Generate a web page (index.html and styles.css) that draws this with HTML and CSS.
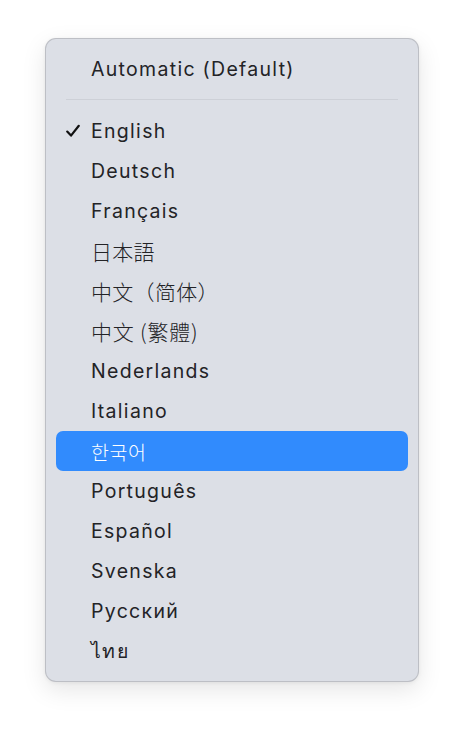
FILE: index.html
```html
<!DOCTYPE html>
<html>
<head>
<meta charset="utf-8">
<link rel="stylesheet" href="styles.css">
</head>
<body>
<div class="menu">
  <div class="item">Automatic (Default)</div>
  <div class="sep"></div>
  <div class="item checked"><svg class="check" viewBox="0 0 16 16" width="16" height="16"><path d="M2.2 8.6 L6 12.6 L13.8 2.8" fill="none" stroke="#111" stroke-width="2.2" stroke-linecap="round" stroke-linejoin="round"/></svg>English</div>
  <div class="item">Deutsch</div>
  <div class="item">Français</div>
  <div class="item cjk" lang="ja">日本語</div>
  <div class="item cjk" lang="zh-CN">中文（简体）</div>
  <div class="item cjk" lang="zh-TW">中文 (繁體)</div>
  <div class="item">Nederlands</div>
  <div class="item">Italiano</div>
  <div class="item cjk active" lang="ko">한국어</div>
  <div class="item">Português</div>
  <div class="item">Español</div>
  <div class="item">Svenska</div>
  <div class="item">Русский</div>
  <div class="item" lang="th">ไทย</div>
</div>
</body>
</html>
```

FILE: styles.css
```css
html, body {
  margin: 0;
  padding: 0;
  background: #ffffff;
}
body {
  font-family: "Inter", "Noto Sans", "Noto Sans CJK SC", sans-serif;
  padding-bottom: 54px;
}
.menu {
  box-sizing: border-box;
  margin: 38px 0 0 45px;
  width: 374px;
  padding: 10px;
  background: #dcdfe6;
  border: 1px solid rgba(0, 0, 0, 0.14);
  border-radius: 11px;
  box-shadow: 0 8px 24px rgba(0, 0, 0, 0.10), 0 1px 4px rgba(0, 0, 0, 0.06);
}
.item {
  position: relative;
  height: 40px;
  display: flex;
  align-items: center;
  padding-left: 35px;
  font-size: 19.5px;
  color: #232326;
  letter-spacing: 1.3px;
  border-radius: 7px;
}
.cjk {
  font-family: "Noto Sans CJK JP", sans-serif;
  font-size: 21px;
  font-weight: 300;
  letter-spacing: 0.3px;
}
.cjk:lang(zh-CN) { font-family: "Noto Sans CJK SC", sans-serif; }
.cjk:lang(zh-TW) { font-family: "Noto Sans CJK TC", sans-serif; letter-spacing: 0.8px; }
.cjk:lang(ko) { font-family: "Noto Sans CJK KR", sans-serif; font-size: 19.5px; letter-spacing: 0.6px; }
.active {
  background: #318bfd;
  color: #ffffff;
}
.check {
  position: absolute;
  left: 9px;
  top: 12px;
}
.sep {
  height: 1px;
  margin: 10px 10px 11px;
  background: #cdd0d7;
}
```
